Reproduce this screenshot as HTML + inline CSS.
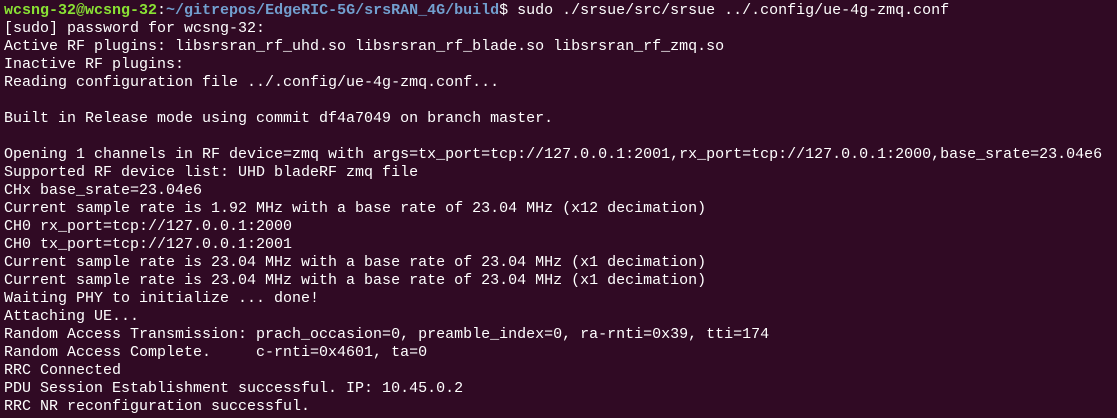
<!DOCTYPE html>
<html><head><meta charset="utf-8"><style>
html,body{margin:0;padding:0;background:#300a24;width:1117px;height:418px;overflow:hidden}
pre{margin:0;padding:2px 0 0 4px;font-family:"Liberation Mono","DejaVu Sans Mono",monospace;font-size:15px;line-height:18px;color:#ffffff;white-space:pre}
.g{color:#8ae234;font-weight:bold}.b{color:#729fcf;font-weight:bold}
</style></head><body><pre><span class="g">wcsng-32@wcsng-32</span>:<span class="b">~/gitrepos/EdgeRIC-5G/srsRAN_4G/build</span>$ sudo ./srsue/src/srsue ../.config/ue-4g-zmq.conf
[sudo] password for wcsng-32:
Active RF plugins: libsrsran_rf_uhd.so libsrsran_rf_blade.so libsrsran_rf_zmq.so
Inactive RF plugins:
Reading configuration file ../.config/ue-4g-zmq.conf...

Built in Release mode using commit df4a7049 on branch master.

Opening 1 channels in RF device=zmq with args=tx_port=tcp://127.0.0.1:2001,rx_port=tcp://127.0.0.1:2000,base_srate=23.04e6
Supported RF device list: UHD bladeRF zmq file
CHx base_srate=23.04e6
Current sample rate is 1.92 MHz with a base rate of 23.04 MHz (x12 decimation)
CH0 rx_port=tcp://127.0.0.1:2000
CH0 tx_port=tcp://127.0.0.1:2001
Current sample rate is 23.04 MHz with a base rate of 23.04 MHz (x1 decimation)
Current sample rate is 23.04 MHz with a base rate of 23.04 MHz (x1 decimation)
Waiting PHY to initialize ... done!
Attaching UE...
Random Access Transmission: prach_occasion=0, preamble_index=0, ra-rnti=0x39, tti=174
Random Access Complete.     c-rnti=0x4601, ta=0
RRC Connected
PDU Session Establishment successful. IP: 10.45.0.2
RRC NR reconfiguration successful.</pre></body></html>
